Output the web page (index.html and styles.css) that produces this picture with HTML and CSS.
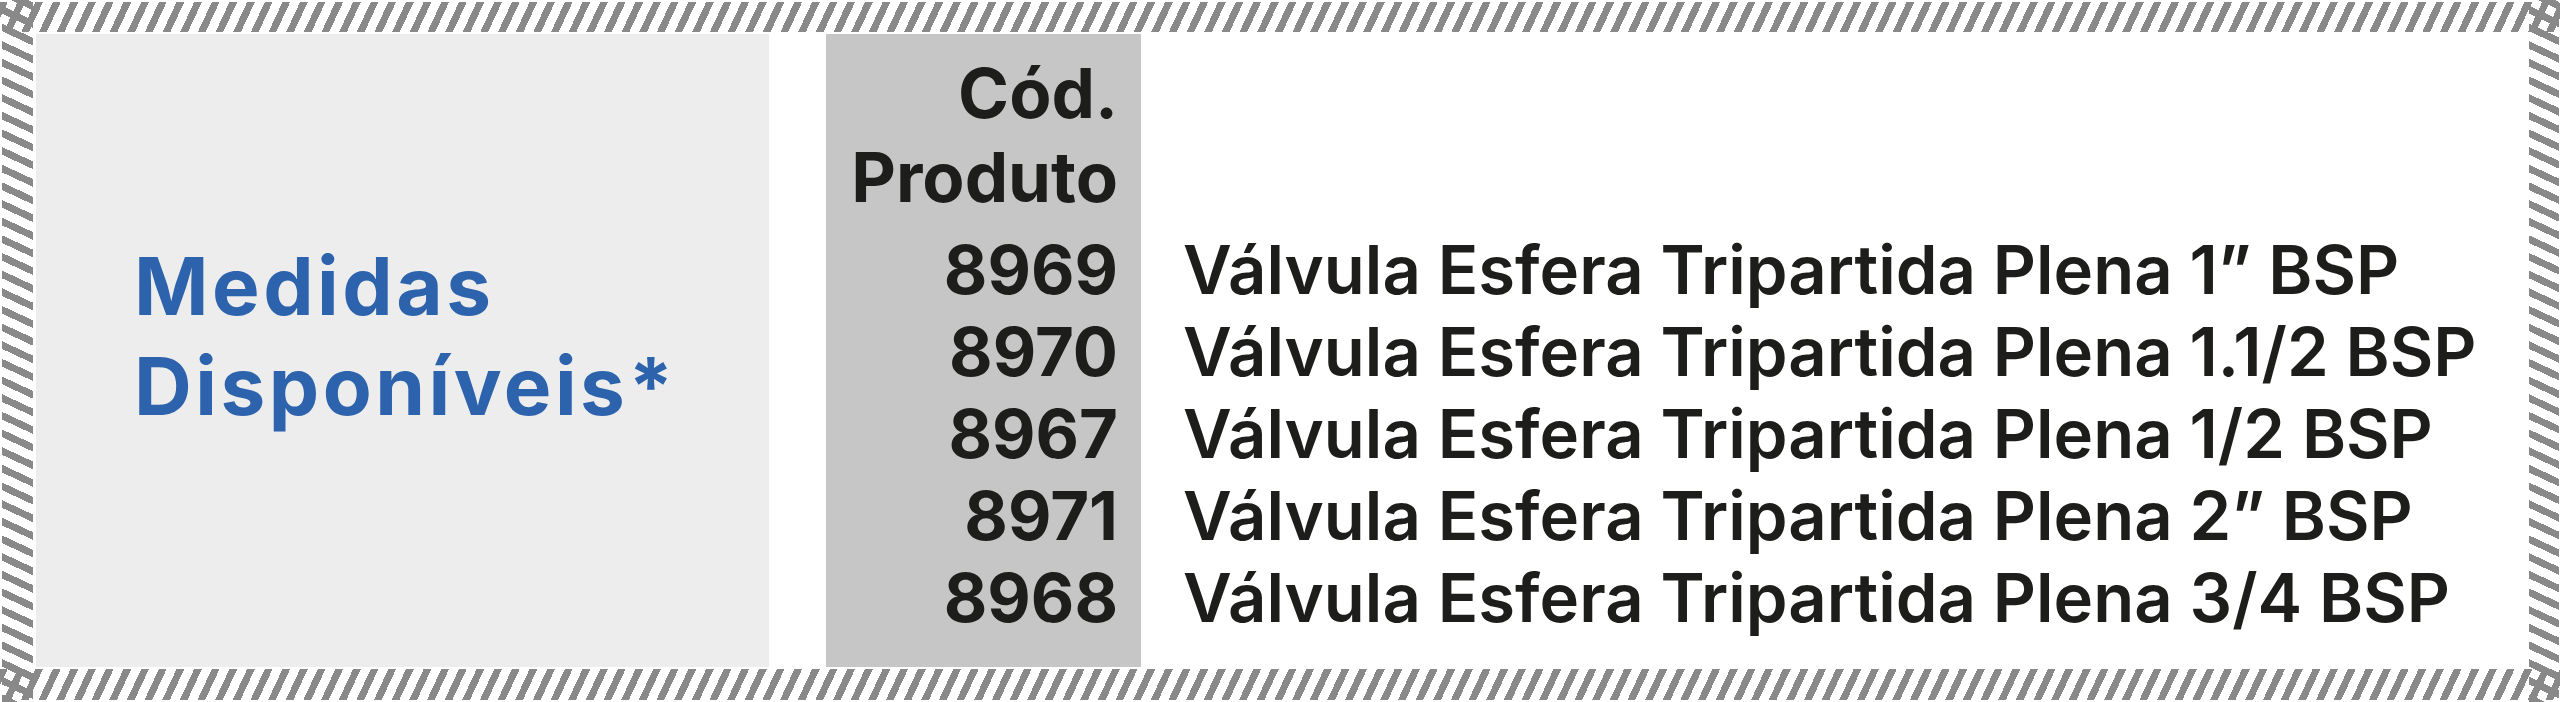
FILE: index.html
```html
<!DOCTYPE html>
<html lang="pt">
<head>
<meta charset="utf-8">
<title>Medidas Disponíveis</title>
<link rel="stylesheet" href="styles.css">
</head>
<body>
<div class="frame">
  <div class="inner">
    <div class="label">
      <h2 class="label-title">Medidas<br>Disponíveis*</h2>
    </div>
    <div class="codes">
      <div class="codes-head">Cód.<br>Produto</div>
      <div class="row code">8969</div>
      <div class="row code">8970</div>
      <div class="row code">8967</div>
      <div class="row code">8971</div>
      <div class="row code">8968</div>
    </div>
    <div class="descs">
      <div class="row desc">Válvula Esfera Tripartida Plena 1” BSP</div>
      <div class="row desc">Válvula Esfera Tripartida Plena 1.1/2 BSP</div>
      <div class="row desc">Válvula Esfera Tripartida Plena 1/2 BSP</div>
      <div class="row desc">Válvula Esfera Tripartida Plena 2” BSP</div>
      <div class="row desc">Válvula Esfera Tripartida Plena 3/4 BSP</div>
    </div>
  </div>
</div>
</body>
</html>
```
FILE: styles.css
```css
* { box-sizing: border-box; }
html, body {
  margin: 0;
  padding: 0;
  background: #ffffff;
}
body {
  font-family: "Inter", "Open Sans", "Liberation Sans", sans-serif;
  color: #1d1d1b;
}
.frame {
  width: 2560px;
  height: 702px;
  padding: 34px 33px 35px 36px;
  background:
    repeating-linear-gradient(115deg, #898989 0 7px, transparent 7px 16px) 0 2px / 100% 30px no-repeat,
    repeating-linear-gradient(115deg, #898989 0 7px, transparent 7px 16px) 0 669px / 100% 31px no-repeat,
    repeating-linear-gradient(25deg, #898989 0 7px, transparent 7px 16px) 2px 0 / 31px 100% no-repeat,
    repeating-linear-gradient(25deg, #898989 0 7px, transparent 7px 16px) 2529px 0 / 30px 100% no-repeat,
    #ffffff;
}
.inner {
  height: 100%;
  background: #ffffff;
  display: flex;
  align-items: stretch;
}
.label {
  width: 733px;
  background: #ededed;
  display: flex;
  align-items: center;
  padding: 0 0 30px 98px;
}
.label-title {
  margin: 0;
  font-size: 80px;
  line-height: 100px;
  font-weight: 700;
  letter-spacing: 3.5px;
  color: #2d63ad;
}
.codes {
  width: 315px;
  margin-left: 57px;
  background: #c6c6c6;
  padding: 17px 23px 0 0;
  text-align: right;
}
.codes-head {
  font-size: 69px;
  line-height: 84px;
  font-weight: 700;
  margin-bottom: 10px;
}
.row {
  font-size: 67px;
  line-height: 82px;
  white-space: nowrap;
}
.code {
  font-weight: 700;
}
.descs {
  margin-left: 42px;
  padding-top: 195px;
}
.desc {
  font-weight: 600;
}
```
